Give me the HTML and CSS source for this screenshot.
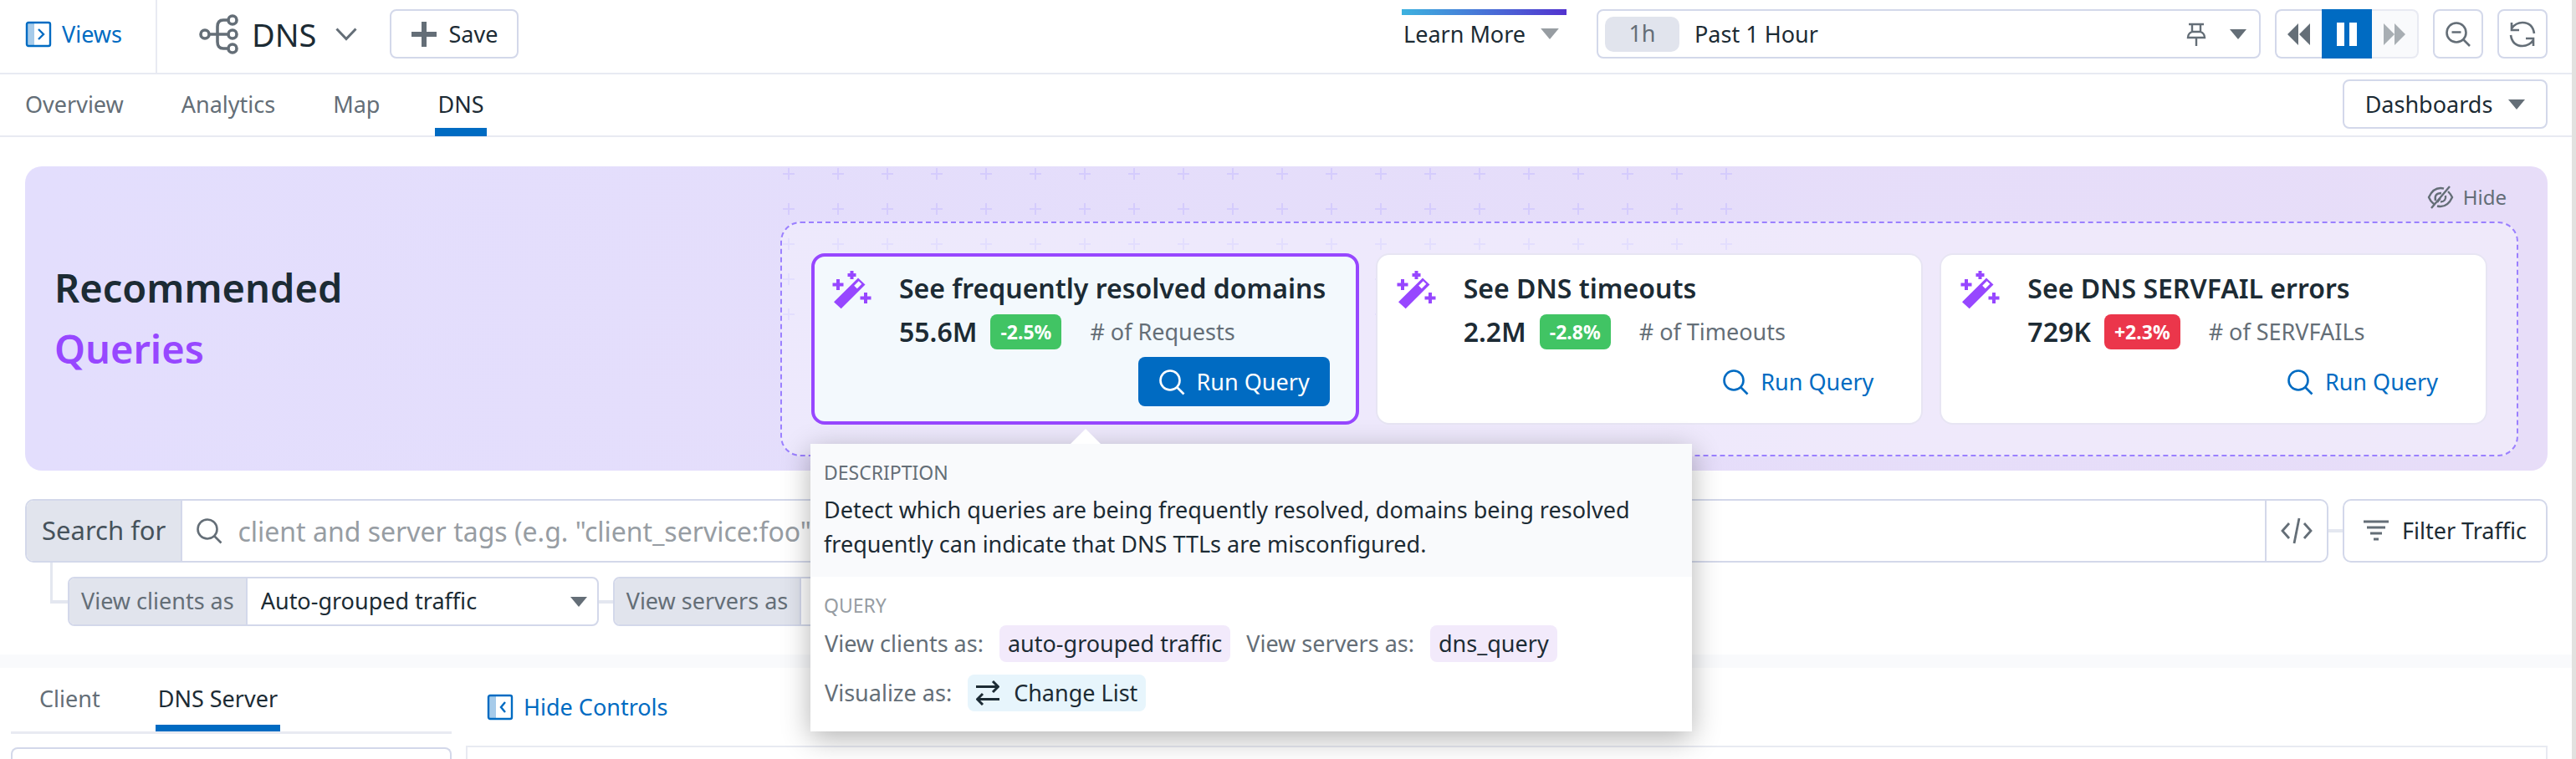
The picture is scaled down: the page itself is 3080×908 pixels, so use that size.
FILE: index.html
```html
<!DOCTYPE html>
<html lang="en">
<head>
<meta charset="utf-8">
<title>DNS</title>
<link rel="stylesheet" href="styles.css">
</head>
<body>
<svg class="defs" aria-hidden="true">
  <symbol id="wand" viewBox="0 0 48 48">
    <path fill="currentColor" fill-rule="evenodd" d="M3 38.300L32 9.500L40.500 17.500L11.700 46.300ZM32.700 13.200L27.200 18.700L30.800 22.300L36.300 16.800Z"/>
    <path fill="none" stroke="currentColor" stroke-width="4" d="M8 11v13M1.500 17.500h13M24.500 1v10M19.500 6h10M41 27v13M34.500 33.500h13"/>
  </symbol>
  <symbol id="search" viewBox="0 0 32 32">
    <g fill="none" stroke="currentColor" stroke-width="2.600"><circle cx="14" cy="14" r="11.500"/><path d="M22 22l8.500 8.500"/></g>
  </symbol>
  <symbol id="caret" viewBox="0 0 20 12"><path fill="currentColor" d="M0 0h20L10 12z"/></symbol>
</svg>

<header class="topbar">
  <a class="views" href="#">
    <svg width="32" height="32" viewBox="0 0 32 32" fill="none" stroke="currentColor" stroke-width="2.400"><path stroke="none" fill="currentColor" opacity=".35" d="M3 3h8v26H3z"/><rect x="2" y="2" width="28" height="28" rx="2"/><path d="M16 10l6 6-6 6"/></svg>
    Views
  </a>
  <div class="top-left">
    <button class="page-title" type="button">
      <svg width="48" height="48" viewBox="0 0 48 48" fill="none" stroke="currentColor" stroke-width="3.600"><circle cx="7" cy="24" r="5"/><circle cx="40" cy="7" r="5"/><circle cx="40" cy="24" r="5"/><circle cx="40" cy="41" r="5"/><path d="M12 24h23M35 7h-6q-7 0-7 8v18q0 8 7 8h6"/></svg>
      DNS
      <svg class="chevron" width="26" height="16" viewBox="0 0 26 16" fill="none" stroke="currentColor" stroke-width="3"><path d="M1.500 1.500L13 13.500 24.500 1.500"/></svg>
    </button>
    <button class="btn save" type="button">
      <svg width="30" height="30" viewBox="0 0 30 30" stroke="currentColor" stroke-width="6"><path d="M15 0v30M0 15h30"/></svg>
      Save
    </button>
  </div>
  <div class="top-right">
    <button class="learn" type="button">Learn More <svg width="22" height="13"><use href="#caret"/></svg></button>
    <div class="timepicker">
      <button class="range" type="button"><span class="range-badge">1h</span>Past 1 Hour</button>
      <button class="bare" type="button" aria-label="Pin"><svg width="24" height="28" viewBox="0 0 24 28" fill="none" stroke="currentColor" stroke-width="2.400"><path d="M3 2h18M7 2v10M17 2v10M7 11q-5 2-5 7h20q0-5-5-7M6 11h12M12 18v10"/></svg></button>
      <button class="bare" type="button" aria-label="Open time ranges"><svg width="20" height="12"><use href="#caret"/></svg></button>
    </div>
    <div class="playback">
      <button class="rewind" type="button" aria-label="Back"><svg width="28" height="26" viewBox="0 0 28 26" fill="currentColor"><path d="M13 0v26L0 13zM27 0v26L14 13z"/></svg></button>
      <button class="pause" type="button" aria-label="Pause"><svg width="24" height="28" viewBox="0 0 24 28" fill="currentColor"><path d="M0 0h9v28H0zM15 0h9v28h-9z"/></svg></button>
      <button class="forward" type="button" aria-label="Forward" disabled><svg width="28" height="26" viewBox="0 0 28 26" fill="currentColor"><path d="M1 0v26l13-13zM14 0v26l13-13z"/></svg></button>
    </div>
    <button class="btn square" type="button" aria-label="Zoom out"><svg width="32" height="32" viewBox="0 0 32 32" fill="none" stroke="currentColor" stroke-width="2.600"><circle cx="14" cy="14" r="11.500"/><path d="M22 22l8 8M8.500 13.500h11"/></svg></button>
    <button class="btn square" type="button" aria-label="Refresh"><svg width="32" height="32" viewBox="0 0 32 32" fill="none" stroke="currentColor" stroke-width="2.600"><path d="M3 9q5-7 13-7 12 0 14 13M3 2v9h9M29 23q-5 7-13 7Q4 30 2 17M29 30v-9h-9"/></svg></button>
  </div>
</header>

<nav class="subnav">
  <ul class="tabs">
    <li><a href="#">Overview</a></li>
    <li><a href="#">Analytics</a></li>
    <li><a href="#">Map</a></li>
    <li><a class="active" href="#">DNS</a></li>
  </ul>
  <button class="btn dashboards" type="button">Dashboards <svg width="20" height="12"><use href="#caret"/></svg></button>
</nav>

<main>
  <section class="banner">
    <svg class="pluses" width="1140" height="190" aria-hidden="true">
      <defs><pattern id="plus" width="59" height="42" patternUnits="userSpaceOnUse"><path d="M8 2v14M1 9h14" stroke="#d5ccfd" stroke-width="2"/></pattern></defs>
      <rect width="1140" height="190" fill="url(#plus)"/>
    </svg>
    <h1>Recommended<br><span>Queries</span></h1>
    <div class="reco">
      <button class="hide" type="button">
        <svg width="32" height="28" viewBox="0 0 32 28" fill="none" stroke="currentColor" stroke-width="2.400"><path d="M20 3.700Q18 3 16 3 7 3 2 14q2 5 6 8M12 24.500q2 .5 4 .5 9 0 14-11-2-4-5-7M10 18q-2-9 7-9M22 12q1 7-6 7.500M27 1L5 27M16 15l-4 5"/></svg>
        Hide
      </button>
      <div class="cards">
        <article class="card selected">
          <svg class="wand" width="48" height="48"><use href="#wand"/></svg>
          <div class="card-body">
            <h2>See frequently resolved domains</h2>
            <p class="stat"><b>55.6M</b><span class="delta">-2.5%</span><span class="unit"># of Requests</span></p>
            <button class="run" type="button"><svg width="32" height="32"><use href="#search"/></svg>Run Query</button>
          </div>
          <div class="popover" role="tooltip">
            <div class="description">
              <h3>DESCRIPTION</h3>
              <p>Detect which queries are being frequently resolved, domains being resolved frequently can indicate that DNS TTLs are misconfigured.</p>
            </div>
            <div class="query">
              <h3>QUERY</h3>
              <div class="terms"><span>View clients as:</span><span class="chip">auto-grouped traffic</span><span>View servers as:</span><span class="chip">dns_query</span></div>
              <div class="terms"><span>Visualize as:</span><span class="chip info"><svg width="28" height="30" viewBox="0 0 28 30" fill="none" stroke="currentColor" stroke-width="3"><path d="M0 7.500h26M20 1l6.500 6.500L20 14M28 22.500H2M8 16l-6.500 6.500L8 29"/></svg>Change List</span></div>
            </div>
          </div>
        </article>
        <article class="card">
          <svg class="wand" width="48" height="48"><use href="#wand"/></svg>
          <div class="card-body">
            <h2>See DNS timeouts</h2>
            <p class="stat"><b>2.2M</b><span class="delta">-2.8%</span><span class="unit"># of Timeouts</span></p>
            <button class="run" type="button"><svg width="32" height="32"><use href="#search"/></svg>Run Query</button>
          </div>
        </article>
        <article class="card">
          <svg class="wand" width="48" height="48"><use href="#wand"/></svg>
          <div class="card-body">
            <h2>See DNS SERVFAIL errors</h2>
            <p class="stat"><b>729K</b><span class="delta up">+2.3%</span><span class="unit"># of SERVFAILs</span></p>
            <button class="run" type="button"><svg width="32" height="32"><use href="#search"/></svg>Run Query</button>
          </div>
        </article>
      </div>
    </div>
  </section>

  <section class="filters">
    <div class="search-row">
      <div class="search">
        <label for="q">Search for</label>
        <svg class="search-icon" width="32" height="32"><use href="#search"/></svg>
        <input id="q" type="text" placeholder="client and server tags (e.g. &quot;client_service:foo&quot;)">
        <button class="code" type="button" aria-label="Edit as code"><svg width="40" height="32" viewBox="0 0 40 32" fill="none" stroke="currentColor" stroke-width="2.800"><path d="M11 7L3 16l8 9M29 7l8 9-8 9M23 1l-6 30"/></svg></button>
      </div>
      <span class="link"></span>
      <button class="btn filter" type="button"><svg width="30" height="26" viewBox="0 0 30 26" stroke="currentColor" stroke-width="3"><path d="M0 2h30M4 9h22M8 16h14M12 23h6"/></svg>Filter Traffic</button>
    </div>
    <div class="group-row">
      <span class="branch"></span>
      <div class="group">
        <label for="clients">View clients as</label>
        <div class="select"><select id="clients"><option>Auto-grouped traffic</option></select><svg width="20" height="12"><use href="#caret"/></svg></div>
      </div>
      <span class="link"></span>
      <div class="group">
        <label for="servers">View servers as</label>
        <div class="select"><select id="servers"><option>dns_query</option></select><svg width="20" height="12"><use href="#caret"/></svg></div>
      </div>
    </div>
  </section>

  <section class="results">
    <aside>
      <ul class="tabs side-tabs">
        <li><a href="#">Client</a></li>
        <li><a class="active" href="#">DNS Server</a></li>
      </ul>
      <div class="facet"></div>
    </aside>
    <div class="main-col">
      <button class="controls" type="button">
        <svg width="32" height="32" viewBox="0 0 32 32" fill="none" stroke="currentColor" stroke-width="2.400"><path stroke="none" fill="currentColor" opacity=".35" d="M3 3h8v26H3z"/><rect x="2" y="2" width="28" height="28" rx="2"/><path d="M22 10l-5 6 5 6"/></svg>
        Hide Controls
      </button>
      <div class="panel"></div>
    </div>
  </section>
</main>
</body>
</html>
```
FILE: styles.css
```css
:root {
  --ink: #1c2b34;
  --muted: #646e77;
  --line: #d3d8ea;
  --rule: #e8eaf2;
  --fill: #e1e4ed;
  --blue: #006bc2;
  --purple: #9747ff;
}

* { box-sizing: border-box; }

body {
  margin: 0;
  height: 100vh;
  overflow: hidden;
  display: flex;
  flex-direction: column;
  border-right: 5px solid #e2e2e0;
  background: #fff;
  color: var(--ink);
  font: 27px/40px "Noto Sans", "Open Sans", sans-serif;
}

h1, h2, h3, p, ul { margin: 0; padding: 0; }
ul { list-style: none; }
a { color: inherit; text-decoration: none; }
button, input, select { font: inherit; color: inherit; background: none; border: 0; margin: 0; padding: 0; }
svg { display: block; flex: none; }
.defs { position: absolute; width: 0; height: 0; }

.btn {
  display: flex;
  align-items: center;
  justify-content: center;
  height: 59px;
  border: 2px solid var(--line);
  border-radius: 8px;
  background: #fff;
}
.btn svg { color: var(--muted); }

/* Top bar */
.topbar { display: flex; border-bottom: 2px solid var(--rule); flex: none; }
.views {
  display: flex;
  align-items: center;
  gap: 12px;
  width: 188px;
  padding: 11px 0 17px 30px;
  border-right: 2px solid var(--rule);
  color: var(--blue);
}
.top-left { display: flex; gap: 39px; padding: 11px 0 17px 50px; }
.page-title { display: flex; align-items: center; gap: 15px; font-size: 38px; }
.page-title svg { color: var(--muted); }
.page-title .chevron { margin-left: 8px; }
.save { width: 154px; gap: 15px; }
.top-right { display: flex; flex: 1; justify-content: flex-end; gap: 17px; padding: 11px 29px 17px 0; }
.learn {
  display: flex;
  align-items: center;
  align-self: flex-start;
  gap: 18px;
  width: 197px;
  height: 59px;
  padding: 0 2px;
  margin-right: 19px;
  background: linear-gradient(90deg, #3db2df, #5233cf) top / 100% 7px no-repeat;
}
.learn svg { color: #979da2; }
.timepicker {
  display: flex;
  align-items: center;
  gap: 28px;
  width: 26%;
  min-width: 794px;
  height: 59px;
  padding: 0 15px 0 8px;
  border: 2px solid var(--line);
  border-radius: 8px;
}
.range { display: flex; align-items: center; flex: 1; gap: 18px; }
.range-badge { width: 89px; height: 42px; border-radius: 10px; background: var(--fill); color: var(--muted); text-align: center; }
.bare { color: var(--muted); }
.playback { display: flex; height: 59px; }
.playback button { display: flex; align-items: center; justify-content: center; width: 56px; border: 2px solid var(--line); color: var(--muted); }
.playback .rewind { border-right: 0; border-radius: 8px 0 0 8px; }
.playback .pause { width: 60px; background: var(--blue); border-color: var(--blue); color: #fff; }
.playback .forward { border-color: var(--rule); border-left: 0; border-radius: 0 8px 8px 0; background: #f9fafc; color: #a8aeb3; }
.square { width: 60px; }

/* Sub navigation */
.subnav { display: flex; justify-content: space-between; padding: 0 29px 0 27px; border-bottom: 2px solid var(--rule); flex: none; }
.tabs { display: flex; gap: 63px; color: var(--muted); }
.subnav .tabs { margin-bottom: -1px; }
.tabs a { display: block; }
.subnav .tabs a { padding: 16px 3px 8px; border-bottom: 10px solid transparent; }
.tabs a.active, .subnav .tabs a.active { color: var(--ink); border-bottom-color: var(--blue); }
.dashboards { gap: 19px; width: 245px; margin: 6px 0 8px; }

main { display: flex; flex-direction: column; flex: 1; }

/* Recommended queries */
.banner {
  position: relative;
  display: flex;
  align-items: center;
  margin: 35px 29px 0 30px;
  padding: 0 35px 17px;
  border-radius: 20px;
  background: linear-gradient(90deg, #e3defd, #e7ddf8);
}
.pluses { position: absolute; top: 0; left: 30%; }
h1 { flex: 1; padding-top: 17px; font-size: 47px; font-weight: 600; line-height: 73px; }
h1 span { color: var(--purple); }
.reco { position: relative; width: 2078px; max-width: 72%; }
.hide { display: flex; align-items: center; gap: 11px; height: 66px; padding: 8px 14px 0 0; margin-left: auto; color: var(--muted); font-size: 24px; }
.cards {
  display: grid;
  grid-template-columns: repeat(3, 1fr);
  gap: 20px;
  padding: 36px 35px;
  border: 2px dashed #9b80ff;
  border-radius: 24px;
  background: rgba(255, 255, 255, .35);
}
.card {
  position: relative;
  display: flex;
  gap: 33px;
  padding: 18px 33px 20px 22px;
  border: 2px solid #e7e5f3;
  border-radius: 16px;
  background: #fff;
}
.card.selected { padding: 16px 31px 18px 20px; border: 4px solid var(--purple); background: #f3f9fd; }
.wand { color: var(--purple); }
.card-body { display: flex; flex-direction: column; flex: 1; gap: 9px; }
.card h2 { font-size: 32px; font-weight: 600; line-height: 44px; white-space: nowrap; }
.stat { display: flex; line-height: 42px; }
.stat b { font-size: 32px; font-weight: 600; }
.delta { margin: 0 34px 0 16px; padding: 0 12px; border-radius: 8px; background: #41c464; color: #fff; font-size: 23px; font-weight: 700; }
.delta.up { background: #eb364b; }
.unit { color: var(--muted); }
.run { display: flex; align-items: center; align-self: flex-end; gap: 14px; height: 59px; padding: 0 24px; border-radius: 8px; color: var(--blue); }
.selected .run { background: var(--blue); color: #fff; }

/* Query details popover */
.popover {
  position: absolute;
  z-index: 2;
  top: calc(100% + 27px);
  left: -5px;
  width: 1054px;
  background: #fff;
  box-shadow: 0 8px 32px rgba(0, 0, 0, .3);
}
.popover::before {
  content: "";
  position: absolute;
  left: 311px;
  bottom: 100%;
  border: 18px solid transparent;
  border-top: 0;
  border-bottom-color: #fff;
}
.description { padding: 16px 40px 19px 16px; background: #f9fafc; }
.popover h3 { margin-bottom: 6px; color: var(--muted); font-size: 23px; font-weight: 400; line-height: 36px; }
.description p { line-height: 41px; }
.query { padding: 16px 16px 24px; }
.query h3 { color: #979da3; }
.terms { display: flex; align-items: center; gap: 19px; padding-left: 1px; color: var(--muted); white-space: nowrap; }
.terms + .terms { margin-top: 15px; }
.chip { display: flex; align-items: center; gap: 17px; padding: 0 10px; border-radius: 8px; background: #f2eafb; color: var(--ink); line-height: 44px; }
.chip.info { background: #e7f5fc; }

/* Search and grouping */
.filters { padding: 34px 29px 34px 30px; border-bottom: 16px solid #f9fafc; }
.search-row { display: flex; align-items: center; }
.search { display: flex; align-items: center; flex: 1; height: 76px; border: 2px solid var(--line); border-radius: 10px; font-size: 31px; }
.search label { align-self: stretch; padding: 0 18px; border-right: 2px solid var(--line); border-radius: 8px 0 0 8px; background: var(--fill); color: #46525b; line-height: 70px; }
.search-icon { margin: 0 18px 0 16px; color: var(--muted); }
.search input { flex: 1; height: 70px; outline: 0; font-size: 32px; }
.search input::placeholder { color: #979da3; opacity: 1; }
.code { display: flex; align-items: center; justify-content: center; align-self: stretch; width: 74px; border-left: 2px solid var(--line); color: var(--muted); }
.link { width: 17px; height: 4px; background: #e4e7f0; }
.filter { width: 245px; height: 76px; gap: 16px; border-radius: 10px; }
.group-row { display: flex; align-items: center; padding-left: 30px; }
.branch { width: 21px; height: 49px; margin-bottom: 27px; border: solid #e4e7f0; border-width: 0 0 4px 3px; }
.group { display: flex; height: 59px; margin-top: 17px; border: 2px solid var(--line); border-radius: 8px; }
.group-row .link { margin-top: 17px; }
.group label { padding: 0 14px; border-right: 2px solid var(--line); border-radius: 6px 0 0 6px; background: var(--fill); color: var(--muted); line-height: 54px; }
.select { position: relative; width: 418px; }
.select select { width: 100%; height: 54px; padding-left: 16px; appearance: none; outline: 0; }
.select svg { position: absolute; right: 12px; top: 22px; color: var(--muted); pointer-events: none; }

/* Results */
.results { display: flex; flex: 1; gap: 17px; padding: 0 29px 0 13px; }
aside { display: flex; flex-direction: column; width: 527px; }
.side-tabs { padding: 0 26px 0 31px; border-bottom: 3px solid var(--rule); }
.side-tabs a { padding: 17px 3px 11px; border-bottom: 8px solid transparent; }
.facet { flex: 1; margin-top: 16px; border: 2px solid var(--line); border-bottom: 0; border-radius: 8px 8px 0 0; }
.main-col { display: flex; flex-direction: column; flex: 1; }
.controls { display: flex; align-items: center; align-self: flex-start; gap: 12px; height: 93px; padding: 0 25px; color: var(--blue); }
.panel { flex: 1; border: 2px solid var(--rule); border-bottom: 0; }
```
